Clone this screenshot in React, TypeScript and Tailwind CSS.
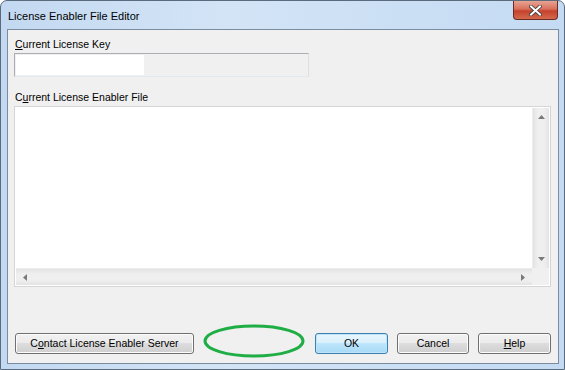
import React from 'react'

const FONT = { fontFamily: '"Liberation Sans", Arial, sans-serif' }

const Btn: React.FC<{ w: string; primary?: boolean; children: React.ReactNode }> = ({ w, primary, children }) => (
  <div
    className={`${w} h-[21px] rounded-[3px] border flex items-center justify-center text-[10.5px] text-black ${
      primary
        ? 'border-[#3c7fb1] bg-[linear-gradient(#eaf6fd_0%,#d9f0fc_45%,#bee6fd_50%,#a7d9f5_100%)] shadow-[inset_0_0_0_1px_#bfe4f8]'
        : 'border-[#707070] bg-[linear-gradient(#f2f2f2_0%,#ebebeb_45%,#dddddd_50%,#cfcfcf_100%)] shadow-[inset_0_0_0_1px_#fcfcfc]'
    }`}
  >
    {children}
  </div>
)

export default function App() {
  return (
    <div className="w-[565px] h-[370px] relative" style={FONT}>
      <div className="w-full h-full flex flex-col rounded-t-[7px] border border-[#5b6b7e] bg-[linear-gradient(90deg,#c3d9f1_0%,#d3e4f6_40%,#c4dbf3_100%)] overflow-hidden">
        {/* title bar */}
        <div className="h-[28px] flex items-start justify-between shrink-0">
          <div className="pl-[7px] pt-[8px] text-[11px] leading-[14px] text-black">
            License Enabler File Editor
          </div>
          <div className="mr-[6px] w-[45px] h-[19px] rounded-b-[4px] border border-t-0 border-[#6b2a22] bg-[linear-gradient(#e8a393_0%,#d8705c_45%,#c6412b_55%,#d36a4e_100%)] flex items-center justify-center">
            <svg width="13" height="11" viewBox="0 0 13 11">
              <path d="M2 1.5 L11 9.5 M11 1.5 L2 9.5" stroke="#3a3a3a" strokeWidth="3.6" strokeLinecap="square" />
              <path d="M2 1.5 L11 9.5 M11 1.5 L2 9.5" stroke="#ffffff" strokeWidth="2" strokeLinecap="square" />
            </svg>
          </div>
        </div>

        {/* client area */}
        <div className="flex-1 ml-[6px] mr-[5px] mb-[5px] border border-[#7b8ba0] bg-[#f0f0f0] flex flex-col px-[6px] pt-[8px] pb-[9px] text-[10.5px] text-black">
          <div className="leading-[13px] ml-[1px]">
            <u className="underline-offset-1">C</u>urrent License Key
          </div>
          <div className="mt-[2px] w-[295px] h-[24px] border border-[#abadb3] border-b-[#e3e9ef] border-r-[#dbdfe6] bg-[#f0f0f0] p-[1px]">
            <div className="w-[128px] h-full bg-white" />
          </div>

          <div className="mt-[14px] leading-[13px] ml-[1px]">
            C<u className="underline-offset-1">u</u>rrent License Enabler File
          </div>
          <div className="mt-[2px] w-[537px] h-[181px] border border-[#d5d5d5] bg-white p-[1px] flex flex-col">
            <div className="flex-1 flex">
              <div className="flex-1 bg-white" />
              <div className="w-[17px] bg-[linear-gradient(90deg,#e3e3e3,#efefef_30%,#efefef_70%,#e3e3e3)] border-l border-[#ececec] flex flex-col items-center justify-between py-[7px]">
                <svg width="7" height="4" viewBox="0 0 7 4"><path d="M0 4 L3.5 0 L7 4Z" fill="#7a7a7a" /></svg>
                <svg width="7" height="4" viewBox="0 0 7 4"><path d="M0 0 L3.5 4 L7 0Z" fill="#7a7a7a" /></svg>
              </div>
            </div>
            <div className="h-[17px] flex">
              <div className="flex-1 bg-[linear-gradient(#e3e3e3,#efefef_30%,#efefef_70%,#e3e3e3)] border-t border-[#ececec] flex items-center justify-between px-[7px]">
                <svg width="4" height="7" viewBox="0 0 4 7"><path d="M4 0 L0 3.5 L4 7Z" fill="#7a7a7a" /></svg>
                <svg width="4" height="7" viewBox="0 0 4 7"><path d="M0 0 L4 3.5 L0 7Z" fill="#7a7a7a" /></svg>
              </div>
              <div className="w-[17px] bg-[#f0f0f0]" />
            </div>
          </div>

          <div className="flex-1" />

          <div className="flex items-center">
            <div className="ml-[1px]">
              <Btn w="w-[179px]">
                <span>
                  C<u className="underline-offset-1">o</u>ntact License Enabler Server
                </span>
              </Btn>
            </div>
            <div className="flex-1" />
            <div className="flex gap-[9px] mr-[1px]">
              <Btn w="w-[73px]" primary>OK</Btn>
              <Btn w="w-[72px]">Cancel</Btn>
              <Btn w="w-[73px]">
                <span>
                  <u className="underline-offset-1">H</u>elp
                </span>
              </Btn>
            </div>
          </div>
        </div>
      </div>

      {/* annotation ellipse */}
      <svg className="absolute left-[203px] top-[324px]" width="102" height="34" viewBox="0 0 102 34">
        <ellipse cx="51" cy="17" rx="49" ry="15" fill="none" stroke="#1fae45" strokeWidth="3" />
      </svg>
    </div>
  )
}
